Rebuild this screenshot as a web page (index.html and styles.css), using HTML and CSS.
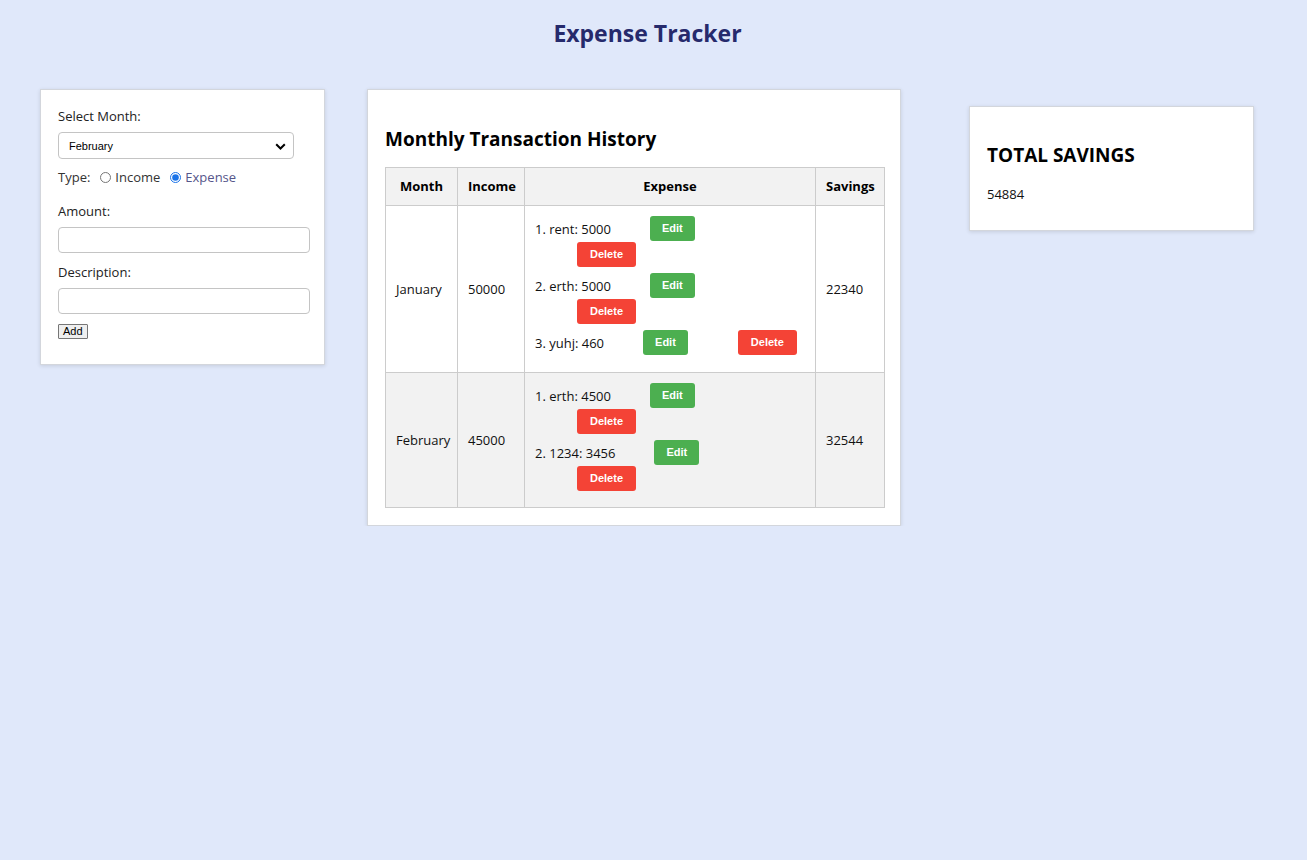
FILE: index.html
```html
<!DOCTYPE html>
<html lang="en">
<head>
<meta charset="utf-8">
<title>Expense Tracker</title>
<link rel="stylesheet" href="styles.css">
</head>
<body>
<h1 class="title">Expense Tracker</h1>
<main class="layout">
  <section class="card form-card">
    <label class="lbl" for="month">Select Month:</label>
    <div class="select-wrap">
      <select id="month" class="select">
        <option>January</option>
        <option selected>February</option>
      </select>
      <svg class="chev" width="11" height="7" viewBox="0 0 11 7"><path d="M1.2 1.2 L5.5 5.5 L9.8 1.2" fill="none" stroke="#000" stroke-width="2"/></svg>
    </div>
    <div class="type-row">
      <span>Type:</span>
      <input type="radio" name="type" id="inc"><label for="inc" class="r-inc">Income</label>
      <input type="radio" name="type" id="exp" checked><label for="exp" class="r-exp">Expense</label>
    </div>
    <label class="lbl lbl-amount" for="amount">Amount:</label>
    <input id="amount" class="field" type="text">
    <label class="lbl lbl-desc" for="desc">Description:</label>
    <input id="desc" class="field" type="text">
    <button class="add">Add</button>
  </section>

  <section class="card history-card">
    <h2 class="card-title">Monthly Transaction History</h2>
    <table class="tbl">
      <colgroup>
        <col class="c-month"><col class="c-income"><col class="c-expense"><col class="c-savings">
      </colgroup>
      <thead>
        <tr><th>Month</th><th>Income</th><th>Expense</th><th>Savings</th></tr>
      </thead>
      <tbody>
        <tr>
          <td>January</td>
          <td>50000</td>
          <td class="exp-cell">
            <ul class="items">
              <li><span class="desc">1. rent: 5000</span><button class="btn edit">Edit</button><button class="btn del wrap">Delete</button></li>
              <li><span class="desc">2. erth: 5000</span><button class="btn edit">Edit</button><button class="btn del wrap">Delete</button></li>
              <li><span class="desc">3. yuhj: 460</span><button class="btn edit">Edit</button><button class="btn del inline">Delete</button></li>
            </ul>
          </td>
          <td>22340</td>
        </tr>
        <tr class="alt">
          <td>February</td>
          <td>45000</td>
          <td class="exp-cell">
            <ul class="items">
              <li><span class="desc">1. erth: 4500</span><button class="btn edit">Edit</button><button class="btn del wrap">Delete</button></li>
              <li><span class="desc">2. 1234: 3456</span><button class="btn edit">Edit</button><button class="btn del wrap">Delete</button></li>
            </ul>
          </td>
          <td>32544</td>
        </tr>
      </tbody>
    </table>
  </section>

  <section class="card savings-card">
    <h2 class="card-title savings-title">TOTAL SAVINGS</h2>
    <p class="total">54884</p>
  </section>
</main>
</body>
</html>
```

FILE: styles.css
```css
* { box-sizing: border-box; }

body {
  margin: 0;
  background: #e0e8fa;
  font-family: "Open Sans", "Noto Sans", sans-serif;
  font-size: 13px;
  color: #222;
}

.title {
  margin: 15px 0 0;
  padding-right: 12px;
  text-align: center;
  font-size: 23px;
  line-height: 36px;
  font-weight: 700;
  color: #262a6c;
}

.layout {
  display: flex;
  align-items: flex-start;
  padding-left: 40px;
  margin-top: 38px;
}

.card {
  background: #fff;
  border: 1px solid #d3d6dc;
  box-shadow: 0 1px 4px rgba(0, 0, 0, 0.12);
  padding: 17px;
}

/* left form */
.form-card {
  width: 285px;
  padding: 17px 17px 25px;
}

.lbl {
  display: block;
  line-height: 18px;
  color: #222;
}

.select-wrap {
  position: relative;
  width: 236px;
  margin-top: 7px;
}

.select {
  appearance: none;
  -webkit-appearance: none;
  display: block;
  width: 236px;
  height: 27px;
  padding: 0 10px;
  border: 1px solid #c4c4c4;
  border-radius: 4px;
  background: #fff;
  font-family: "Liberation Sans", Arial, sans-serif;
  font-size: 11px;
  color: #000;
}

.chev {
  position: absolute;
  right: 8px;
  top: 11px;
  pointer-events: none;
}

.type-row {
  display: flex;
  align-items: center;
  height: 18px;
  margin-top: 9px;
  color: #333;
}

.type-row input {
  width: 11px;
  height: 11px;
  margin: 0 4px 0 0;
  accent-color: #1a73e8;
}

.type-row #inc { margin-left: 10px; }
.type-row #exp { margin-left: 10px; }

.r-exp { color: #55558a; }

.lbl-amount { margin-top: 16px; }
.lbl-desc { margin-top: 10px; }

.field {
  display: block;
  width: 252px;
  height: 26px;
  margin-top: 7px;
  border: 1px solid #c4c4c4;
  border-radius: 4px;
  background: #fff;
}

.add {
  display: block;
  margin-top: 10px;
  height: 15px;
  padding: 0 4px;
  line-height: 13px;
  font-family: "Liberation Sans", Arial, sans-serif;
  font-size: 11px;
  color: #000;
  background: #efefef;
  border: 1px solid #767676;
  border-radius: 1px;
}

/* middle */
.history-card {
  width: 534px;
  margin-left: 42px;
}

.card-title {
  margin: 19px 0 15px;
  font-size: 19px;
  line-height: 26px;
  font-weight: 700;
  color: #000;
}

.tbl {
  width: 499px;
  border-collapse: collapse;
  table-layout: fixed;
}

.c-month { width: 72px; }
.c-income { width: 67px; }
.c-expense { width: 291px; }
.c-savings { width: 69px; }

.tbl th,
.tbl td {
  border: 1px solid #ccc;
  padding: 10px;
  line-height: 17px;
}

.tbl th {
  background: #f2f2f2;
  font-weight: 700;
  text-align: center;
  color: #000;
}

.tbl td {
  vertical-align: middle;
  color: #111;
}

.tbl tr.alt td { background: #f2f2f2; }

.items {
  list-style: none;
  margin: 0;
  padding: 0;
}

.items li {
  margin-bottom: 6px;
  line-height: 26px;
}

.desc {
  display: inline-block;
  vertical-align: top;
  line-height: 26px;
}

.btn {
  display: inline-block;
  vertical-align: top;
  height: 25px;
  padding: 0 12px;
  border: 0;
  border-radius: 3px;
  color: #fff;
  font-family: "Liberation Sans", Arial, sans-serif;
  font-size: 11px;
  font-weight: 700;
  line-height: 25px;
}

.edit {
  background: #4caf50;
  margin-left: 39px;
}

.del {
  background: #f44336;
  padding: 0 13px;
}

.del.wrap {
  display: block;
  margin-left: 42px;
}

.del.inline { margin-left: 50px; }

/* right */
.savings-card {
  width: 285px;
  margin-left: 68px;
  margin-top: 17px;
  padding-bottom: 17px;
}

.savings-title {
  margin: 18px 0 0;
  font-size: 19px;
}

.total {
  margin: 17px 0 10px;
  line-height: 18px;
  color: #111;
}
```
